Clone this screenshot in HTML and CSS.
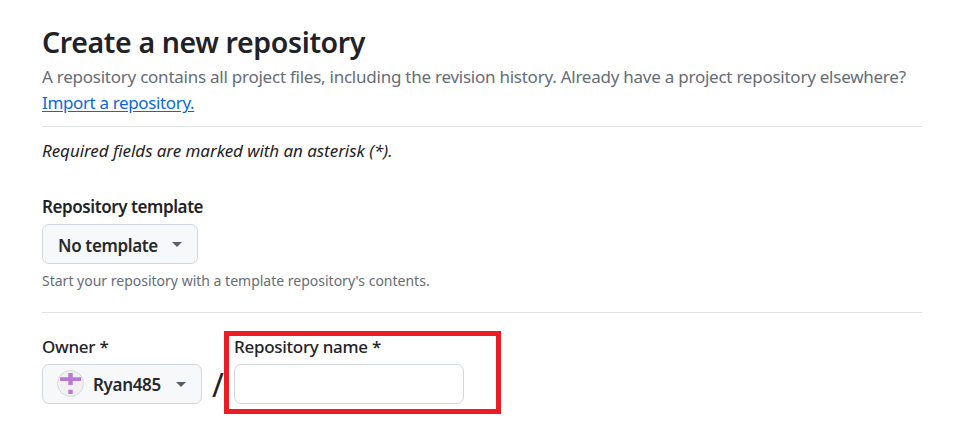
FILE: index.html
```html
<!DOCTYPE html>
<html lang="en">
<head>
<meta charset="utf-8">
<title>Create a new repository</title>
<link rel="stylesheet" href="styles.css">
</head>
<body>
<main class="page">
  <header class="intro">
    <h1>Create a new repository</h1>
    <p class="lead">A repository contains all project files, including the revision history. Already have a project repository elsewhere?</p>
    <p class="lead"><a class="link" href="#">Import a repository.</a></p>
  </header>
  <p class="required">Required fields are marked with an asterisk (*).</p>
  <section class="template">
    <div class="label">Repository template</div>
    <button class="btn btn-template" type="button"><span>No template</span><i class="caret"></i></button>
    <p class="hint">Start your repository with a template repository's contents.</p>
  </section>
  <section class="naming">
    <div class="owner">
      <div class="label label-field">Owner *</div>
      <button class="btn btn-owner" type="button">
        <svg class="avatar" viewBox="0 0 27 27"><circle cx="13.5" cy="13.5" r="13" fill="#f0f0f0" stroke="#d5d8dc"/><path fill="#b57bd3" d="M3 7.3h8.3V3h4.4v4.3H24V11h-8.3v4h-4.4v-4H3zM11.3 19.8h4.4V24h-4.4z"/></svg>
        <span>Ryan485</span><i class="caret"></i>
      </button>
    </div>
    <span class="slash">/</span>
    <div class="name">
      <label class="label label-field" for="repo">Repository name *</label>
      <input class="input" id="repo" type="text">
    </div>
  </section>
</main>
</body>
</html>
```
FILE: styles.css
```css
* { box-sizing: border-box; }
body { margin: 0; background: #fff; color: #1f2328; font-family: "Noto Sans", sans-serif; }
h1, p { margin: 0; }
.page { width: 880px; margin-left: 42px; padding-top: 22px; white-space: nowrap; }
.intro { height: 105px; border-bottom: 1px solid #dfe2e5; }
h1 { margin-bottom: 2px; font-size: 28.5px; font-weight: 600; line-height: 40px; letter-spacing: -0.37px; }
.lead { font-size: 17px; line-height: 26px; letter-spacing: -0.245px; color: #656d76; }
.link { color: #0969da; letter-spacing: -0.36px; text-underline-offset: 2px; }
.required { padding-top: 11px; font-size: 17px; line-height: 26px; letter-spacing: -0.06px; font-style: italic; }
.template { margin-top: 30px; height: 119px; border-bottom: 1px solid #dfe2e5; }
.label { display: block; font-size: 17px; font-weight: 600; line-height: 26px; letter-spacing: -0.42px; }
.label-field { font-weight: 500; letter-spacing: -0.28px; }
.btn { display: flex; align-items: center; height: 40px; margin-top: 4px; padding: 0 15px; border: 1px solid #d0d7de; border-radius: 7px; background: #f6f8fa; color: #24292f; font: 600 17px "Noto Sans", sans-serif; letter-spacing: -0.35px; }
.btn span { padding-top: 2px; }
.btn-template { width: 156px; }
.btn-owner { width: 160px; padding-left: 14px; }
.btn-owner span { padding-top: 1px; }
.caret { margin-left: auto; border: 5px solid transparent; border-top-color: #57606a; border-bottom: 0; }
.hint { margin-top: 6px; font-size: 14px; line-height: 22px; color: #656d76; }
.naming { display: flex; padding-top: 21px; }
.avatar { width: 27px; height: 27px; margin: 0 9px 1px 0; }
.slash { width: 22px; padding: 31px 0 0 10px; font-size: 32px; line-height: 40px; }
.name { width: 277px; height: 83px; margin-top: -3px; padding: 0 5px; border: 5px solid #ed1c24; }
.name .label { margin-top: -2px; }
.input { display: block; width: 230px; height: 40px; margin-top: 4px; border: 1px solid #d0d7de; border-radius: 7px; }
```
